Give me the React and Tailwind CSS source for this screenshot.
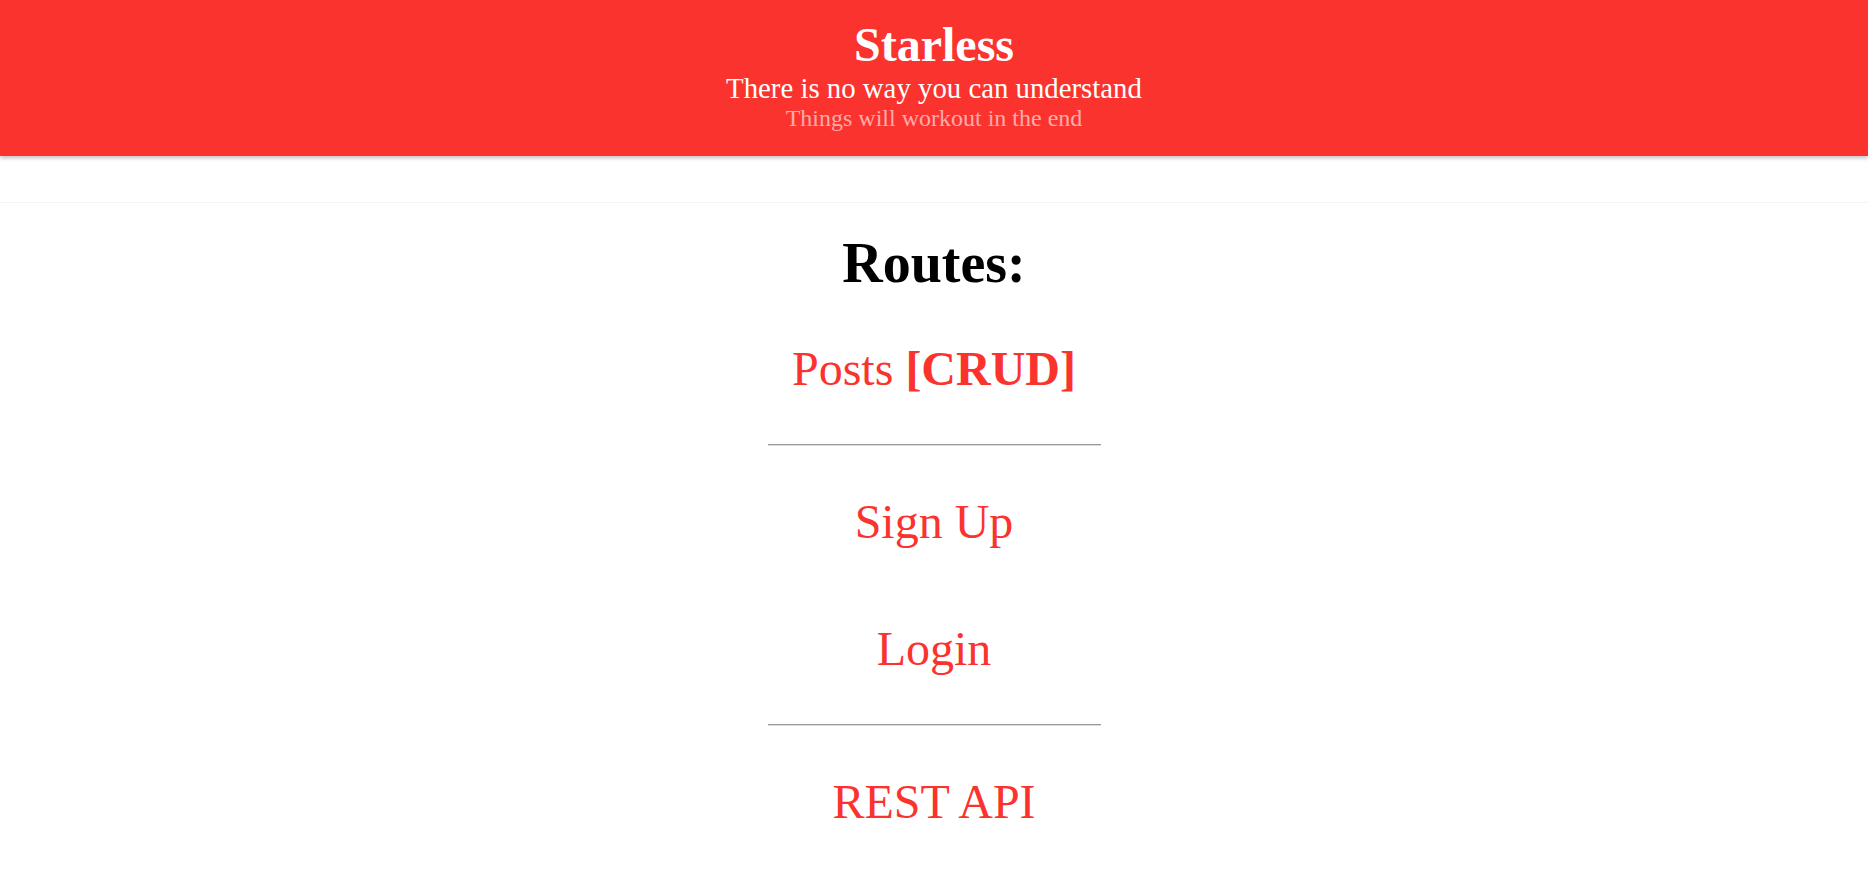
const links = [
  { label: "Sign Up", key: "signup" },
  { label: "Login", key: "login" },
];

const Divider = ({ className }) => (
  <div className={`mx-auto w-[333px] border-t border-t-[#999999] border-b border-b-[#dcdcdc] ${className}`} />
);

const App = () => {
  return (
    <div className="min-h-screen bg-white font-['Liberation_Serif',serif] leading-[normal]">
      {/* HEADER */}
      <header className="bg-[#fb332e] pt-[17px] pb-[24px] text-center shadow-[0_2px_4px_rgba(0,0,0,0.25)] relative z-10">
        <h1 className="text-[48px] font-bold text-white">Starless</h1>
        <p className="text-[28.8px] text-white">There is no way you can understand</p>
        <p className="text-[24px] text-white/60">Things will workout in the end</p>
      </header>

      {/* NAV SPACER */}
      <div className="h-[47px] border-b border-[#f4f4f4]" />

      {/* ROUTES */}
      <main className="pt-[28px] pb-[40px] text-center">
        <h2 className="text-[56px] font-bold text-black">Routes:</h2>

        <a href="#" className="mt-[46px] block text-[48px] text-[#fb332e]">
          Posts <span className="font-bold">[CRUD]</span>
        </a>

        <Divider className="mt-[48px]" />

        <a href="#" className="mt-[48px] block text-[48px] text-[#fb332e]">
          {links[0].label}
        </a>
        <a href="#" className="mt-[72px] block text-[48px] text-[#fb332e]">
          {links[1].label}
        </a>

        <Divider className="mt-[48px]" />

        <a href="#" className="mt-[48px] block text-[48px] text-[#fb332e]">
          REST API
        </a>
      </main>
    </div>
  );
};

export default App;
